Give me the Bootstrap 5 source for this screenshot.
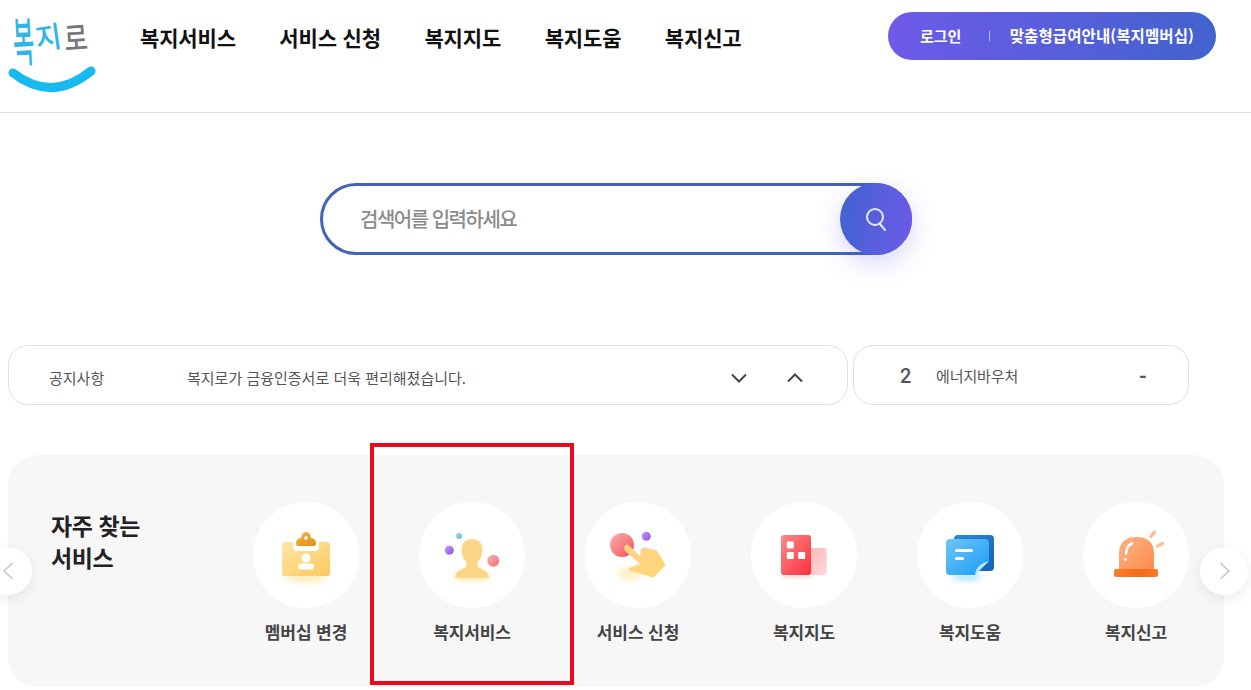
<!DOCTYPE html>
<html lang="ko">
<head>
    <meta charset="UTF-8">
    <meta name="viewport" content="width=device-width, initial-scale=1.0">
    <title>복지로</title>
    <link href="https://cdn.jsdelivr.net/npm/bootstrap@5.3.5/dist/css/bootstrap.min.css" rel="stylesheet">
    <style>
        body {
            font-family: "Noto Sans CJK KR", "Noto Sans", sans-serif;
            background-color: #fff;
            overflow-x: hidden;
            color: #222;
        }
        .top-header {
            height: 113px;
            border-bottom: 1px solid #dedede;
            padding: 0 35px 0 8px;
        }
        .logo-box { width: 90px; height: 96px; margin-right: 42px; align-self: flex-start; }
        .logo-box text { font-family: "Noto Sans CJK KR", sans-serif; font-weight: 500; }
        .main-menu { gap: 43.5px; margin-bottom: 37px; }
        .main-menu a { font-size: 21px; font-weight: 700; color: #111; text-decoration: none; line-height: 1; letter-spacing: -.15px; }
        .member-pill {
            width: 328px;
            height: 48px;
            margin-bottom: 40px;
            border-radius: 24px;
            background: linear-gradient(100deg, #6e5ae8, #4263cd);
            padding: 0 22px 0 32px;
        }
        .member-pill a { font-size: 15px; font-weight: 700; color: #fff; text-decoration: none; white-space: nowrap; }
        .member-pill a.pill-long { font-size: 15.5px; letter-spacing: .1px; }
        .pill-sep { width: 1px; height: 10px; background: rgba(255,255,255,.55); margin: 0 20px 0 28px; }
        .search-wrap { padding: 70px 0 90px 320px; }
        .search-box {
            width: 592px;
            height: 72px;
            border: 3px solid #4262bb;
            border-radius: 36px;
            background: #fff;
        }
        .search-box input {
            border: 0;
            outline: 0;
            background: transparent;
            padding: 0 0 2px 37px;
            font-size: 20px;
            font-weight: 500;
            letter-spacing: -1.5px;
            width: 500px;
            height: 100%;
        }
        .search-box input::placeholder { color: #8b8b8b; opacity: 1; }
        .search-btn {
            width: 72px;
            height: 72px;
            margin: -3px -3px -3px auto;
            border: 0;
            border-radius: 36px;
            background: linear-gradient(100deg, #4063cf, #6e5ae8);
            box-shadow: 0 8px 24px rgba(90, 90, 230, .25);
        }
        .info-row { padding-left: 8px; gap: 5px; }
        .info-box {
            height: 60px;
            border: 1px solid #dfdfdf;
            border-radius: 20px;
            background: #fff;
        }
        .notice-box { width: 840px; padding: 6px 43px 0 40px; font-size: 15px; color: #555; }
        .notice-label { width: 138px; }
        .notice-arrows { margin-left: auto; gap: 38px; }
        .energy-box { width: 336px; padding: 2px 41px 0 46px; color: #555; }
        .energy-no { font-family: Roboto, sans-serif; font-size: 20px; font-weight: 500; width: 36px; }
        .energy-name { font-size: 15px; letter-spacing: -.1px; }
        .energy-dash { margin-left: auto; font-family: Roboto, sans-serif; font-size: 20px; font-weight: 700; }
        .quick-panel {
            position: relative;
            width: 1216px;
            height: 232px;
            margin: 50px 0 0 8px;
            padding: 47px 0 0 43px;
            background: #f7f7f8;
            border-radius: 30px;
        }
        .quick-title { width: 172px; margin: 7px 0 0; font-size: 23px; font-weight: 700; line-height: 32px; color: #222; letter-spacing: -.4px; }
        .quick-item { width: 166px; text-align: center; }
        .quick-circle { width: 106px; height: 106px; border-radius: 50%; background: #fff; margin: 0 auto 12px; }
        .quick-circle svg { display: block; }
        .quick-name { font-size: 17px; font-weight: 700; color: #444; line-height: 24px; white-space: nowrap; letter-spacing: -.1px; }
        .slide-arrow {
            position: absolute;
            top: 92px;
            width: 48px;
            height: 48px;
            border: 0;
            padding: 0;
            border-radius: 50%;
            background: #fff;
            box-shadow: 0 4px 14px rgba(0, 0, 0, .08);
        }
        .slide-prev { left: -24px; }
        .slide-next { left: 1192px; }
        .red-mark {
            position: absolute;
            left: 362px;
            top: -12px;
            width: 204px;
            height: 242px;
            border: 4px solid #ea0a20;
        }
    </style>
</head>
<body>
    <!-- Header -->
    <header class="top-header d-flex align-items-center">
        <a href="#" class="logo-box d-block">
            <svg width="90" height="96" viewBox="0 0 90 96">
                <text transform="translate(6,62) rotate(-3) scale(1,2.300)" font-size="23" fill="#2fb6e6">복</text>
                <text transform="translate(29,50) rotate(-8) scale(1.050,1.100)" font-size="27" fill="#2fb6e6">지</text>
                <text transform="translate(57,51) rotate(-4) scale(.95,1.200)" font-size="27" fill="#77777b">로</text>
                <path d="M5 73 Q44 103 83 71" fill="none" stroke="#16b9f0" stroke-width="9" stroke-linecap="round"/>
            </svg>
        </a>
        <nav class="main-menu d-flex">
            <a href="#">복지서비스</a>
            <a href="#">서비스 신청</a>
            <a href="#">복지지도</a>
            <a href="#">복지도움</a>
            <a href="#">복지신고</a>
        </nav>
        <div class="member-pill d-flex align-items-center ms-auto">
            <a href="#">로그인</a>
            <span class="pill-sep"></span>
            <a href="#" class="pill-long">맞춤형급여안내(복지멤버십)</a>
        </div>
    </header>

    <!-- Search -->
    <div class="search-wrap">
        <form class="search-box d-flex align-items-center">
            <input type="text" placeholder="검색어를 입력하세요">
            <button type="button" class="search-btn d-flex align-items-center justify-content-center">
                <svg width="24" height="26" viewBox="0 0 24 26" fill="none" stroke="#e6e8fb" stroke-width="2" stroke-linecap="round">
                    <circle cx="11" cy="11" r="8"/>
                    <path d="M15.5 17.5 L21 24"/>
                </svg>
            </button>
        </form>
    </div>

    <!-- Notice -->
    <div class="info-row d-flex">
        <div class="info-box notice-box d-flex align-items-center">
            <span class="notice-label">공지사항</span>
            <span>복지로가 금융인증서로 더욱 편리해졌습니다.</span>
            <div class="notice-arrows d-flex">
                <svg width="18" height="10" viewBox="0 0 18 10" fill="none" stroke="#444" stroke-width="2"><polyline points="2,1.5 9,8.5 16,1.5"/></svg>
                <svg width="18" height="10" viewBox="0 0 18 10" fill="none" stroke="#444" stroke-width="2"><polyline points="2,8.5 9,1.5 16,8.5"/></svg>
            </div>
        </div>
        <div class="info-box energy-box d-flex align-items-center">
            <span class="energy-no">2</span>
            <span class="energy-name">에너지바우처</span>
            <span class="energy-dash">-</span>
        </div>
    </div>

    <!-- Quick services -->
    <section class="quick-panel d-flex">
        <h2 class="quick-title">자주 찾는<br>서비스</h2>

        <div class="quick-item">
            <div class="quick-circle">
                <svg width="106" height="106" viewBox="0 0 106 106">
                    <defs>
                        <linearGradient id="yel" x1="0" y1="0" x2="1" y2="1"><stop offset="0" stop-color="#ffe6a6"/><stop offset="1" stop-color="#fcc95f"/></linearGradient>
                        <linearGradient id="ora" x1="0" y1="0" x2="1" y2="1"><stop offset="0" stop-color="#f2b63f"/><stop offset="1" stop-color="#dd8f17"/></linearGradient>
                        <filter id="soft" x="-40%" y="-40%" width="180%" height="180%"><feGaussianBlur stdDeviation="3"/></filter>
                    </defs>
                    <ellipse cx="53" cy="76" rx="20" ry="4" fill="#ffe08a" opacity=".7" filter="url(#soft)"/>
                    <rect x="29" y="40" width="48" height="34" rx="3" fill="url(#yel)"/>
                    <rect x="40" y="36" width="26" height="13" rx="4" fill="#fff"/>
                    <path d="M43 41.500 Q43 36.500 48 36 Q49 30 53 30 Q57 30 58 36 Q63 36.500 63 41.500 Q63 44 61 44 H45 Q43 44 43 41.500 Z" fill="url(#ora)"/>
                    <circle cx="53" cy="36" r="1.800" fill="#fff"/>
                    <circle cx="53" cy="56" r="4.500" fill="#fff"/>
                    <rect x="45" y="61.500" width="16" height="6" rx="3" fill="#fff"/>
                </svg>
            </div>
            <div class="quick-name">멤버십 변경</div>
        </div>

        <div class="quick-item">
            <div class="quick-circle">
                <svg width="106" height="106" viewBox="0 0 106 106">
                    <defs>
                        <linearGradient id="pur" x1="0" y1="0" x2="1" y2="1"><stop offset="0" stop-color="#c79cf2"/><stop offset="1" stop-color="#8c4fe6"/></linearGradient>
                        <linearGradient id="blu" x1="0" y1="0" x2="1" y2="1"><stop offset="0" stop-color="#9edcf2"/><stop offset="1" stop-color="#5fb5e2"/></linearGradient>
                        <linearGradient id="rds" x1="0" y1="0" x2="1" y2="1"><stop offset="0" stop-color="#f9b0ae"/><stop offset="1" stop-color="#ef6f75"/></linearGradient>
                    </defs>
                    <ellipse cx="53" cy="76" rx="18" ry="3.500" fill="#ffe08a" opacity=".7" filter="url(#soft)"/>
                    <path d="M36 76 Q36 70 42 67.500 L47 65 Q48 63 47 60 Q42.500 55 42.500 48 Q43 37 53 37 Q63 37 63.500 48 Q63.500 55 59 60 Q58 63 59 65 L64 67.500 Q70 70 70 76 Z" fill="#fdd588"/>
                    <circle cx="30.300" cy="48.300" r="4.500" fill="url(#pur)"/>
                    <circle cx="40" cy="34" r="3" fill="url(#blu)"/>
                    <circle cx="74.300" cy="58.700" r="6" fill="url(#rds)"/>
                </svg>
            </div>
            <div class="quick-name">복지서비스</div>
        </div>

        <div class="quick-item">
            <div class="quick-circle">
                <svg width="106" height="106" viewBox="0 0 106 106">
                    <defs>
                        <linearGradient id="rdb" x1="0" y1="0" x2="1" y2="1"><stop offset="0" stop-color="#fbb1ae"/><stop offset=".7" stop-color="#f56d6f"/><stop offset="1" stop-color="#f02c36"/></linearGradient>
                        <linearGradient id="han" x1="0" y1="0" x2="1" y2="1"><stop offset="0" stop-color="#fcd28a"/><stop offset="1" stop-color="#fed873"/></linearGradient>
                    </defs>
                    <ellipse cx="44" cy="72" rx="12" ry="6" fill="#ffe9a8" opacity=".7" filter="url(#soft)"/>
                    <circle cx="37" cy="43" r="12" fill="url(#rdb)"/>
                    <circle cx="61.300" cy="34.300" r="4.500" fill="url(#pur)"/>
                    <path d="M39.500 44 Q42 41 45 44.500 L55 54 L56 47 L60 45 L64 47 L71.500 48 L80.700 63 L68.300 75.700 L43.300 68 Q44 65 55 62 L40 49 Q38.500 46 39.500 44 Z" fill="url(#han)"/>
                </svg>
            </div>
            <div class="quick-name">서비스 신청</div>
        </div>

        <div class="quick-item">
            <div class="quick-circle">
                <svg width="106" height="106" viewBox="0 0 106 106">
                    <defs>
                        <linearGradient id="red" x1="0" y1="0" x2="1" y2="1"><stop offset="0" stop-color="#f98a8c"/><stop offset="1" stop-color="#fa2f3a"/></linearGradient>
                        <linearGradient id="pnk" x1="0" y1="0" x2="1" y2="1"><stop offset="0" stop-color="#fdb4b6"/><stop offset="1" stop-color="#fed9da"/></linearGradient>
                    </defs>
                    <rect x="33" y="70" width="26" height="5" fill="#f99" opacity=".6" filter="url(#soft)"/>
                    <rect x="56" y="46" width="19.700" height="27" rx="3" fill="url(#pnk)"/>
                    <rect x="30" y="33" width="30" height="40" rx="3" fill="url(#red)"/>
                    <rect x="35.800" y="39.500" width="7" height="7" rx="1" fill="#fff"/>
                    <rect x="35.800" y="50" width="7" height="7" rx="1" fill="#fff"/>
                    <rect x="47.200" y="50" width="7" height="7" rx="1" fill="#fff"/>
                </svg>
            </div>
            <div class="quick-name">복지지도</div>
        </div>

        <div class="quick-item">
            <div class="quick-circle">
                <svg width="106" height="106" viewBox="0 0 106 106">
                    <defs>
                        <linearGradient id="dbl" x1="0" y1="0" x2="1" y2="1"><stop offset="0" stop-color="#2f86d8"/><stop offset="1" stop-color="#0f63b5"/></linearGradient>
                        <linearGradient id="lbl" x1="0" y1="0" x2="1" y2="1"><stop offset="0" stop-color="#6cc6f6"/><stop offset="1" stop-color="#1c9cf5"/></linearGradient>
                    </defs>
                    <ellipse cx="50" cy="75" rx="15" ry="3.500" fill="#8fdcff" opacity=".8" filter="url(#soft)"/>
                    <rect x="37" y="33" width="40" height="36" rx="4" fill="url(#dbl)"/>
                    <path d="M33 37 H68 Q72 37 72 41 V59 L58 73 H33 Q29 73 29 69 V41 Q29 37 33 37 Z" fill="url(#lbl)"/>
                    <path d="M58 73 Q59 62 72 59 Z" fill="#bfe0f5"/>
                    <rect x="38" y="47" width="18" height="3" rx="1.500" fill="#fff"/>
                    <rect x="38" y="55" width="9" height="3" rx="1.500" fill="#fff"/>
                </svg>
            </div>
            <div class="quick-name">복지도움</div>
        </div>

        <div class="quick-item">
            <div class="quick-circle">
                <svg width="106" height="106" viewBox="0 0 106 106">
                    <defs>
                        <linearGradient id="dom" x1="0" y1="0" x2="1" y2="1"><stop offset="0" stop-color="#fbb588"/><stop offset="1" stop-color="#fd8c4a"/></linearGradient>
                        <linearGradient id="bas" x1="0" y1="0" x2="1" y2="0"><stop offset="0" stop-color="#ff7b2a"/><stop offset=".6" stop-color="#f56a1c"/><stop offset="1" stop-color="#ff7b2a"/></linearGradient>
                    </defs>
                    <path d="M36 67 V52 Q36 35 53.500 35 Q71 35 71 52 V67 Z" fill="url(#dom)"/>
                    <rect x="31" y="67" width="44" height="8" rx="2" fill="url(#bas)"/>
                    <path d="M49 41.500 Q43.500 43.500 43 51.500" fill="none" stroke="#fff" stroke-width="2.500" stroke-linecap="round"/>
                    <circle cx="42.500" cy="57.500" r="1.600" fill="#fff"/>
                    <path d="M68 34.500 L71.500 30" stroke="#fbbf9c" stroke-width="3.500" stroke-linecap="round"/>
                    <path d="M74.500 44 L79.500 41.500" stroke="#fbbf9c" stroke-width="3.500" stroke-linecap="round"/>
                </svg>
            </div>
            <div class="quick-name">복지신고</div>
        </div>

        <button type="button" class="slide-arrow slide-prev d-flex align-items-center justify-content-center" aria-label="이전">
            <svg width="13" height="20" viewBox="0 0 13 20" fill="none" stroke="#c6c6c6" stroke-width="1.500"><polyline points="10.500,2 2,10 10.500,18"/></svg>
        </button>
        <button type="button" class="slide-arrow slide-next d-flex align-items-center justify-content-center" aria-label="다음">
            <svg width="13" height="20" viewBox="0 0 13 20" fill="none" stroke="#c6c6c6" stroke-width="1.500"><polyline points="2.500,2 11,10 2.500,18"/></svg>
        </button>
        <div class="red-mark"></div>
    </section>

    <script src="https://cdn.jsdelivr.net/npm/bootstrap@5.3.5/dist/js/bootstrap.bundle.min.js"></script>
</body>
</html>
